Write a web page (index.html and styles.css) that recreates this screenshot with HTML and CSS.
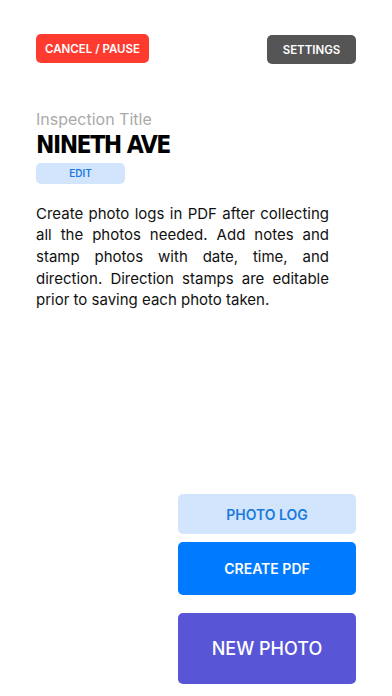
FILE: index.html
```html
<!DOCTYPE html>
<html lang="en">
<head>
  <meta charset="UTF-8">
  <meta name="viewport" content="width=device-width, initial-scale=1.0">
  <title>Photo Log</title>
  <link rel="stylesheet" href="styles.css">
</head>
<body>
  <div class="screen">
    <header class="top-bar">
      <button class="btn-cancel">CANCEL / PAUSE</button>
      <button class="btn-settings">SETTINGS</button>
    </header>

    <section class="title-block">
      <div class="title-label">Inspection Title</div>
      <h1 class="title-name">NINETH AVE</h1>
      <button class="btn-edit">EDIT</button>
    </section>

    <p class="intro">Create photo logs in PDF after collecting all the photos needed. Add notes and stamp photos with date, time, and direction. Direction stamps are editable prior to saving each photo taken.</p>

    <div class="actions">
      <button class="btn-log">PHOTO LOG</button>
      <button class="btn-pdf">CREATE PDF</button>
      <button class="btn-new">NEW PHOTO</button>
    </div>
  </div>
</body>
</html>
```

FILE: styles.css
```css
body {
  margin: 0;
  font-family: 'Inter', 'Liberation Sans', sans-serif;
  background-color: #fff;
}

.screen {
  height: 696px;
  display: flex;
  flex-direction: column;
  padding: 34px 36px 12px 36px;
  box-sizing: border-box;
}

button {
  border: none;
  border-radius: 5px;
  font-family: inherit;
  font-weight: 600;
  cursor: pointer;
}

.top-bar {
  display: flex;
  justify-content: space-between;
  align-items: flex-start;
}

.btn-cancel {
  width: 113px;
  height: 29px;
  background-color: #ff3b30;
  color: #fff;
  font-size: 11.5px;
}

.btn-settings {
  width: 89px;
  height: 29px;
  margin-top: 1px;
  background-color: #555;
  color: #fff;
  font-size: 11.5px;
}

.title-block {
  margin-top: 45px;
}

.title-label {
  color: #aaa;
  font-size: 16px;
  line-height: 20px;
}

.title-name {
  margin: 0;
  font-family: 'DejaVu Sans Condensed', 'DejaVu Sans', sans-serif;
  font-stretch: condensed;
  font-weight: bold;
  font-size: 24.5px;
  line-height: 32px;
  letter-spacing: -1.5px;
  color: #000;
}

.btn-edit {
  width: 89px;
  height: 21px;
  margin-top: 0;
  background-color: #d3e5fc;
  color: #1a7ae0;
  font-size: 10px;
}

.intro {
  margin: 19px 0 0 0;
  width: 293px;
  font-size: 15px;
  line-height: 21.7px;
  text-align: justify;
  color: #111;
}

.actions {
  margin-top: auto;
  margin-left: auto;
  width: 178px;
  display: flex;
  flex-direction: column;
}

.btn-log {
  height: 40px;
  background-color: #d3e5fc;
  color: #1a7ae0;
  font-size: 14px;
}

.btn-pdf {
  height: 53px;
  margin-top: 8px;
  background-color: #007aff;
  color: #fff;
  font-size: 14px;
}

.btn-new {
  height: 71px;
  margin-top: 18px;
  background-color: #5856d6;
  color: #fff;
  font-size: 18px;
  font-weight: 500;
}
```
